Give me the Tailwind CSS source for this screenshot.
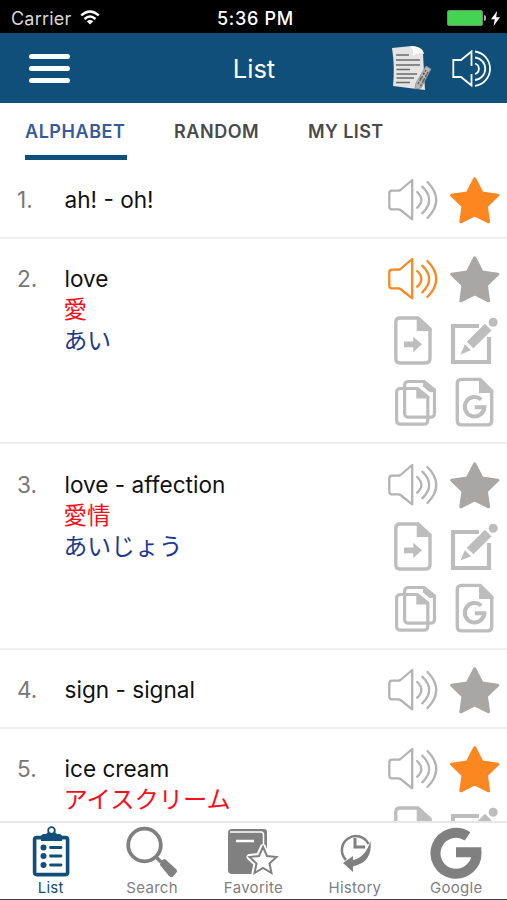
<!DOCTYPE html>
<html lang="en">
<head>
<meta charset="utf-8">
<title>List</title>
<script src="https://cdn.jsdelivr.net/npm/@tailwindcss/browser@4"></script>
</head>
<body class="bg-white">
<svg class="hidden">
  <symbol id="speaker" viewBox="0 0 62 62"><g fill="none" stroke="currentColor" stroke-width="2.3" stroke-linecap="round" stroke-linejoin="round"><path d="M30.2 11V50.3L18.5 41Q17.5 40.3 16.5 40.3H10Q7.3 40.3 7.3 37.5V24.5Q7.3 21.7 10 21.7H16.5Q17.5 21.7 18.5 21Z"/><path d="M35.2 23Q43.5 31 35.2 38.7M40.3 17.7Q54 31 40.3 44.3M45.5 13Q63 31 45.5 49"/></g></symbol>
  <symbol id="star" viewBox="0 0 62 62"><path fill="currentColor" stroke="currentColor" stroke-width="3" stroke-linejoin="round" d="M30.7 9.8L38 24L53.8 26.2L42.4 37.3L44.6 52.8L30.7 45.8L16.8 52.8L19 37.3L7.6 26.2L23.4 24Z"/></symbol>
  <symbol id="send" viewBox="0 0 62 62"><path fill="none" stroke="currentColor" stroke-width="3.4" d="M18 8H36L48 19V48.500Q48 53 43.500 53H18Q13.800 53 13.800 48.500V12.200Q13.800 8 18 8Z"/><path fill="currentColor" d="M34.700 7H36.700L49.300 18.500V21H34.700ZM22 31.400H31.300V26.800L40 34.300L31.300 41.900V37.300H22Z"/></symbol>
  <symbol id="edit" viewBox="0 0 62 62"><path fill="none" stroke="currentColor" stroke-width="4.2" d="M35 16H9V52H45V27"/><path fill="currentColor" d="M22.800 31.800L41 13.800L47.500 20.400L29.300 38.300ZM20.800 34.200L27 40.200L16.500 44.500Z"/><circle cx="49.200" cy="12.200" r="4.500" fill="currentColor"/></symbol>
  <symbol id="copy" viewBox="0 0 62 62"><g fill="none" stroke="currentColor" stroke-width="3.200"><path d="M26.500 9.500H42L52.500 18V41Q52.500 45.200 48.300 45.200H26.800Q22.600 45.200 22.600 41V13.400Q22.600 9.500 26.500 9.500Z"/><path d="M18.500 16.500H35L45.800 25V48Q45.800 52.200 41.600 52.200H18.800Q14.600 52.200 14.600 48V20.400Q14.600 16.500 18.500 16.500Z"/></g><path fill="currentColor" d="M34.300 15.300H36L47.300 24.500V26.500H34.300ZM41 8.500H43L54 17.500V20H47.500L41 14.500Z"/></symbol>
  <symbol id="gfile" viewBox="0 0 62 62"><path fill="none" stroke="currentColor" stroke-width="3.400" d="M17.500 7.400H36L47.700 19V48.500Q47.700 52.900 43.500 52.900H17.500Q13.300 52.900 13.300 48.500V11.600Q13.300 7.400 17.500 7.400Z"/><path fill="currentColor" d="M35 6H36.800L49.300 18.800V21H35Z"/><path fill="none" stroke="currentColor" stroke-width="4" d="M37.300 27.600A9.800 9.800 0 1 0 40.400 35.200H30.800"/></symbol>
</svg>
<div class="w-[507px] h-[900px] flex flex-col overflow-hidden font-[Inter,'Noto_Sans_CJK_JP',sans-serif]">
  <div class="h-[33px] shrink-0 bg-black text-white grid grid-cols-3 items-center pl-[11px] pr-[7px] pt-[3px] text-[18px]">
    <div class="flex items-center gap-[9px] text-[#d8d8d8]"><span class="tracking-[0.2px]">Carrier</span>
      <svg class="w-5 h-[15px] -mt-0.5" viewBox="0 0 20 15" fill="none" stroke="#fff" stroke-width="2.4"><path d="M1.2 5.4Q10 -2.4 18.8 5.4M4.5 9Q10 4 15.5 9"/><path fill="#fff" stroke="none" d="M6.8 11.3Q10 8.500 13.2 11.3L10 14.6Z"/></svg></div>
    <div class="text-center font-medium tracking-[0.7px] whitespace-nowrap">5:36 PM</div>
    <div class="flex items-center justify-end"><span class="w-[36px] h-4 bg-[#43d551] border border-[#6a8f6d] rounded-[2px]"></span><span class="w-[2px] h-[6px] bg-[#aaa] rounded-r ml-px"></span>
      <svg class="w-[9px] h-[15px] ml-[5px]" viewBox="0 0 9 15"><path fill="#fff" d="M6 0L0 8.3H3.7L2.6 15L9 6.2H5.2Z"/></svg></div>
  </div>
  <header class="h-[70px] shrink-0 bg-[#0f4f79] text-white grid grid-cols-3 items-center pl-[29px] pr-[14px]">
    <div class="flex flex-col gap-[7px]"><span class="w-[41px] h-[5px] rounded-full bg-white"></span><span class="w-[41px] h-[5px] rounded-full bg-white"></span><span class="w-[41px] h-[5px] rounded-full bg-white"></span></div>
    <h1 class="text-center text-[25.5px] leading-none pr-[14px] pt-0.5">List</h1>
    <div class="flex items-center justify-end gap-5">
      <svg class="w-[41px] h-[46px]" viewBox="0 0 41 46"><path fill="#e4e4e4" d="M1 3L21 1Q31 2 32 9L34 45L2 41Q4 22 1 3Z"/><path fill="#fff" d="M19 1Q32 1 33 9Q27 6 22 11Q23 4 19 1Z"/><g stroke="#696969" stroke-width="1.6"><path d="M5 10H18M5 15H29M5 20H29M5.500 24.500H19M5.500 29H26M5.500 33H23M5 37.500H19"/></g><path fill="#b5b5b5" stroke="#8a8a8a" stroke-width=".8" d="M35 21L40 24L30 43L24 44L25 38Z"/><path stroke="#555" stroke-width="1.300" stroke-dasharray="2 1.500" d="M35 25L27 39M37 27L29 42M32 28L36 30M29 33L33 36"/></svg>
      <svg class="w-[41px] h-[37px]" viewBox="0 0 41 37" fill="none" stroke="#fff" stroke-width="1.800"><path d="M19.500 16V1.500L9 10H1.300V27H9L19.500 35.500V24"/><path d="M23 13.500A5.500 5.500 0 0 1 23 24M23 7.500A11.300 11.300 0 0 1 23 30M23 1.500A17.300 17.300 0 0 1 23 35.800"/></svg>
    </div>
  </header>
  <nav class="h-[57px] shrink-0 flex gap-[48px] pl-[25px] text-[18px] leading-[57px] font-semibold tracking-[0.55px] text-[#4a4a4a]">
    <a class="w-[102px] h-[57px] border-b-[5px] border-[#0f4f79] text-[#39599b] whitespace-nowrap">ALPHABET</a>
    <a class="w-[86px] whitespace-nowrap -ml-px mr-px">RANDOM</a>
    <a class="whitespace-nowrap -ml-px tracking-[0.4px]">MY LIST</a>
  </nav>
  <main class="h-[661px] shrink-0 overflow-hidden text-[22.6px] leading-[31px] text-[#111]">
    <section class="h-[79px] border-b-2 border-[#efefef] pt-[9px] pl-[17px] pr-px flex">
      <span class="w-[47.5px] pt-[15px] text-[#777]">1.</span><div class="grow pt-[15px]"><p>ah! - oh!</p></div>
      <div class="grid grid-cols-2 w-[124px] h-[62px] text-[#b3b3b3]"><svg class="size-[62px]"><use href="#speaker"/></svg><svg class="size-[62px] text-[#fc861f]"><use href="#star"/></svg></div>
    </section>
    <section class="h-[205px] border-b-2 border-[#efefef] pt-[9px] pl-[17px] pr-px flex">
      <span class="w-[47.5px] pt-[15px] text-[#777]">2.</span><div class="grow pt-[15px]"><p>love</p><p class="text-[#fb0d1b] text-[23.5px] -ml-px">愛</p><p class="text-[#1d3a8a] text-[23.8px] -ml-px">あい</p></div>
      <div class="grid grid-cols-2 w-[124px] h-[186px] text-[#bdbdbd]"><svg class="size-[62px] text-[#fc861f]"><use href="#speaker"/></svg><svg class="size-[62px] text-[#a9a7a5]"><use href="#star"/></svg><svg class="size-[62px]"><use href="#send"/></svg><svg class="size-[62px]"><use href="#edit"/></svg><svg class="size-[62px]"><use href="#copy"/></svg><svg class="size-[62px]"><use href="#gfile"/></svg></div>
    </section>
    <section class="h-[206px] border-b-2 border-[#efefef] pt-[9.5px] pl-[17px] pr-px flex">
      <span class="w-[47.5px] pt-[15px] text-[#777]">3.</span><div class="grow pt-[15px]"><p>love - affection</p><p class="text-[#fb0d1b] text-[23.5px] -ml-px">愛情</p><p class="text-[#1d3a8a] text-[23.8px] -ml-px">あいじょう</p></div>
      <div class="grid grid-cols-2 w-[124px] h-[186px] text-[#bdbdbd]"><svg class="size-[62px] text-[#b3b3b3]"><use href="#speaker"/></svg><svg class="size-[62px] text-[#a9a7a5]"><use href="#star"/></svg><svg class="size-[62px]"><use href="#send"/></svg><svg class="size-[62px]"><use href="#edit"/></svg><svg class="size-[62px]"><use href="#copy"/></svg><svg class="size-[62px]"><use href="#gfile"/></svg></div>
    </section>
    <section class="h-[79px] border-b-2 border-[#efefef] pt-[9px] pl-[17px] pr-px flex">
      <span class="w-[47.5px] pt-[15px] text-[#777]">4.</span><div class="grow pt-[15px]"><p>sign - signal</p></div>
      <div class="grid grid-cols-2 w-[124px] h-[62px] text-[#b3b3b3]"><svg class="size-[62px]"><use href="#speaker"/></svg><svg class="size-[62px] text-[#a9a7a5]"><use href="#star"/></svg></div>
    </section>
    <section class="h-[205px] pt-[9px] pl-[17px] pr-px flex">
      <span class="w-[47.5px] pt-[15px] text-[#777]">5.</span><div class="grow pt-[15px]"><p>ice cream</p><p class="text-[#fb0d1b] text-[24.300px] -ml-px">アイスクリーム</p></div>
      <div class="grid grid-cols-2 w-[124px] h-[124px] text-[#bdbdbd]"><svg class="size-[62px] text-[#b3b3b3]"><use href="#speaker"/></svg><svg class="size-[62px] text-[#fc861f]"><use href="#star"/></svg><svg class="size-[62px]"><use href="#send"/></svg><svg class="size-[62px]"><use href="#edit"/></svg></div>
    </section>
  </main>
  <footer class="h-[79px] shrink-0 bg-white border-t-2 border-t-[#e6e6e6] border-b border-b-[#444] grid grid-cols-5 text-[15px] leading-[18px] tracking-[0.3px] text-[#808080] text-center">
    <div class="flex flex-col items-center text-[#0f4f79]">
      <svg class="w-[60px] h-[56px]" viewBox="0 0 60 56"><rect x="13.600" y="14.600" width="33" height="37" rx="2" fill="none" stroke="currentColor" stroke-width="3.600"/><path fill="currentColor" d="M20 18V14Q20 11 23 11H25Q27 10 27 8H34Q34 10 36 11H38Q41 11 41 14V18Z"/><circle cx="30.500" cy="7.500" r="3.300" fill="#fff" stroke="currentColor" stroke-width="1.800"/><g fill="currentColor"><circle cx="22.500" cy="24.500" r="3"/><circle cx="22.500" cy="33" r="3"/><circle cx="22.500" cy="42" r="3"/></g><path stroke="currentColor" stroke-width="2.800" stroke-linecap="round" d="M29.500 24.500H40M29.500 33H40M29.500 42H40"/></svg><span>List</span></div>
    <div class="flex flex-col items-center">
      <svg class="w-[60px] h-[56px]" viewBox="0 0 60 56"><circle cx="22.500" cy="22" r="16.300" fill="none" stroke="currentColor" stroke-width="3.800"/><path stroke="currentColor" stroke-width="3.500" d="M34 34L39 39"/><path fill="currentColor" d="M38 42Q38 37 43 36L54 46Q56 48 54 50L51 53.500Q49 55 47 53Z"/></svg><span>Search</span></div>
    <div class="flex flex-col items-center">
      <svg class="w-[60px] h-[56px]" viewBox="0 0 60 56"><path fill="currentColor" d="M9 6H41Q44 6 44 9V33L36 51H9Q5 51 5 47V10Q5 6 9 6Z"/><path fill="none" stroke="#fff" stroke-width="1.500" d="M7 9H38Q40.500 9 40.500 12V30"/><path stroke="#fff" stroke-width="2.500" d="M13 18H31"/><path fill="#fff" stroke="#fff" stroke-width="6" stroke-linejoin="round" d="M40 24L44 33L53.500 34L46.500 40.500L48.500 50L40 45L31.500 50L33.500 40.500L26.500 34L36 33Z"/><path fill="#fff" stroke="currentColor" stroke-width="2" d="M40 24L44 33L53.500 34L46.500 40.500L48.500 50L40 45L31.500 50L33.500 40.500L26.500 34L36 33Z"/></svg><span>Favorite</span></div>
    <div class="flex flex-col items-center">
      <svg class="w-[60px] h-[56px]" viewBox="0 0 60 56"><path fill="none" stroke="currentColor" stroke-width="2.500" d="M21 37A14 14 0 1 1 43.500 21"/><path fill="none" stroke="currentColor" stroke-width="3" d="M30 15V24H40"/><path fill="currentColor" d="M45.500 18Q48 39 28 43.500V49L18 40L28 33V37Q40 35 45.500 18Z"/></svg><span>History</span></div>
    <div class="flex flex-col items-center">
      <svg class="w-[60px] h-[56px]" viewBox="0 0 60 56"><path fill="none" stroke="currentColor" stroke-width="10" d="M41.500 13.300A20.500 20.500 0 1 0 50.500 29.300H30"/></svg><span>Google</span></div>
  </footer>
</div>
</body>
</html>
